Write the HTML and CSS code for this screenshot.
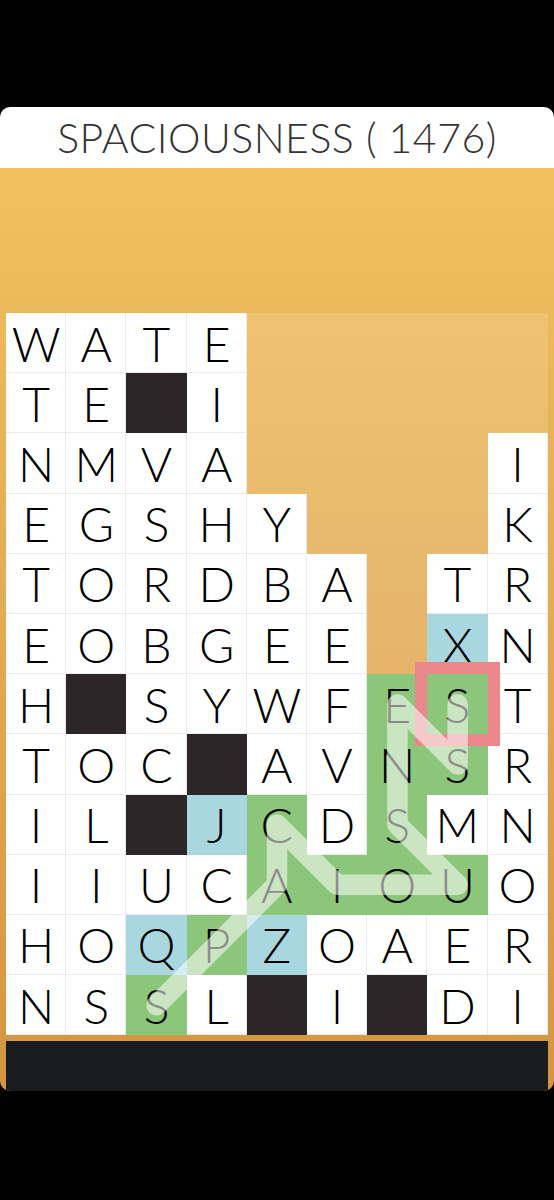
FILE: index.html
```html
<!DOCTYPE html>
<html lang="en">
<head>
    <meta charset="UTF-8">
    <meta name="viewport" content="width=device-width, initial-scale=1.0">
    <title>Spaciousness</title>
    <link rel="stylesheet" href="styles.css">
</head>
<body>

    <div class="screen">
        <div class="title-bar">
            <h1>SPACIOUSNESS ( 1476)</h1>
        </div>
        <div class="frame">
            <div class="board" id="board">
                <svg class="trail" viewBox="0 0 9 12" preserveAspectRatio="none">
                    <polyline points="2.5,11.5 3.5,10.5 4.5,9.5 4.5,8.5 5.5,9.5 6.5,9.5 7.5,9.5 6.5,8.5 6.5,7.5 6.5,6.5 7.5,7.5 7.5,6.5" />
                </svg>
            </div>
            <div class="tray"></div>
        </div>
    </div>

    <script>
        // '.' = no tile, '#' = blocked tile
        const rows = [
            "WATE.....",
            "TE#I.....",
            "NMVA....I",
            "EGSHY...K",
            "TORDBA.TR",
            "EOBGEE.XN",
            "H#SYWFEST",
            "TOC#AVNSR",
            "IL#JCDSMN",
            "IIUCAIOUO",
            "HOQPZOAER",
            "NSSL#I#DI"
        ];

        // cells of the found word, row-col
        const found = ["11-2", "10-3", "9-4", "8-4", "9-5", "9-6", "9-7", "8-6", "7-6", "6-6", "7-7", "6-7"];
        const hints = ["5-7", "8-3", "10-2", "10-4"];
        const target = "6-7";

        const board = document.getElementById('board');
        const trail = board.querySelector('.trail');

        rows.forEach(function (row, r) {
            row.split('').forEach(function (ch, c) {
                const key = r + '-' + c;
                const cell = document.createElement('div');
                cell.className = 'cell';

                if (ch === '.') {
                    cell.classList.add('empty');
                } else if (ch === '#') {
                    cell.classList.add('blocked');
                } else {
                    cell.textContent = ch;
                    if (found.includes(key)) cell.classList.add('found');
                    if (hints.includes(key)) cell.classList.add('hint');
                }
                if (key === target) cell.classList.add('target');

                board.insertBefore(cell, trail);
            });
        });
    </script>
</body>
</html>
```

FILE: styles.css
```css
* {
    box-sizing: border-box;
}

body {
    margin: 0;
    background-color: #000000;
    font-family: Lato, "Open Sans", sans-serif;
}

.screen {
    width: 554px;
    padding-top: 107px;
}

.title-bar {
    height: 61px;
    display: flex;
    justify-content: center;
    align-items: center;
    background-color: #ffffff;
    border-radius: 10px 10px 0 0;
}

.title-bar h1 {
    margin: 0;
    font-size: 41px;
    font-weight: 300;
    color: #333333;
    letter-spacing: 0.5px;
}

.frame {
    display: flex;
    flex-direction: column;
    gap: 6px;
    padding: 145px 6px 0;
    background: linear-gradient(#f1c25c 0%, #ebb75a 20%, #e0a650 60%, #d5953f 100%);
    border-radius: 0 0 10px 10px;
    overflow: hidden;
}

.board {
    position: relative;
    display: grid;
    grid-template-columns: repeat(9, 60.2px);
    grid-template-rows: repeat(12, 60.2px);
    background-color: rgba(255, 255, 255, 0.14);
}

.cell {
    position: relative;
    display: flex;
    justify-content: center;
    align-items: center;
    background-color: #ffffff;
    box-shadow: inset -1px -1px 0 #ebebeb;
    font-size: 48px;
    font-weight: 300;
    color: #000000;
}

.cell.empty {
    background-color: transparent;
    box-shadow: none;
}

.cell.blocked {
    background-color: #2d2628;
    box-shadow: none;
}

.cell.found {
    background-color: #8cc67a;
    box-shadow: none;
}

.cell.hint {
    background-color: #a9d7e0;
    box-shadow: none;
}

/* pink square round the last letter */
.cell.target::after {
    content: '';
    position: absolute;
    top: -12px;
    left: -12px;
    right: -12px;
    bottom: -12px;
    border: 12px solid #e9878b;
    z-index: 1;
}

.trail {
    position: absolute;
    top: 0;
    left: 0;
    width: 100%;
    height: 100%;
    z-index: 2;
}

.trail polyline {
    fill: none;
    stroke: rgba(255, 255, 255, 0.55);
    stroke-width: 0.34;
    stroke-linecap: round;
    stroke-linejoin: round;
}

.tray {
    height: 50px;
    background-color: #1a1b1f;
}
```
